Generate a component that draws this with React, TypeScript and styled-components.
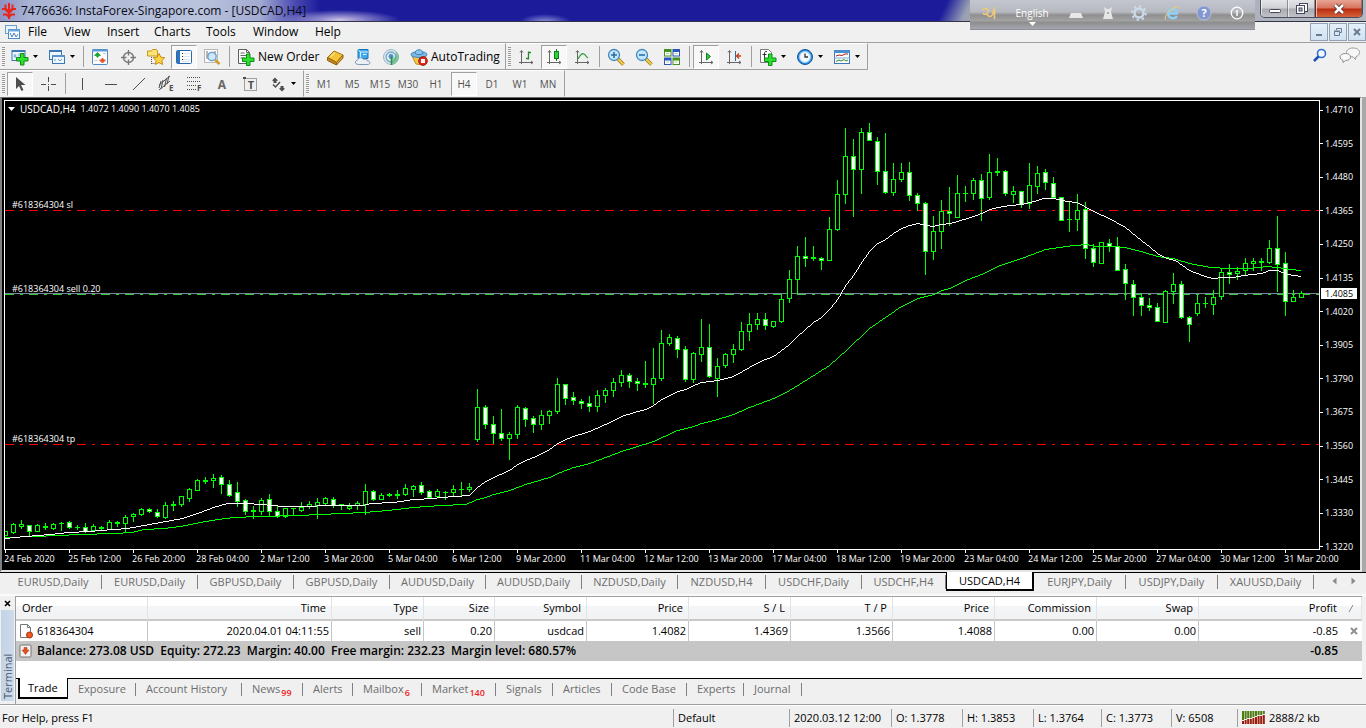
import React from "react";
import styled, { createGlobalStyle } from "styled-components";

const GlobalStyle = createGlobalStyle`
  * { box-sizing: border-box; }
  html, body { margin: 0; padding: 0; }
  body {
    background: #f0f0f0;
    color: #000;
    font: 11px/16px "Open Sans", "Noto Sans", sans-serif;
    overflow: hidden;
  }
  button {
    font: inherit;
    color: inherit;
    margin: 0;
    padding: 0;
    border: 0;
    background: none;
  }
`;

/* ---------- window frame ---------- */

const Window = styled.div`
  min-height: 100vh;
  display: flex;
  flex-direction: column;
  position: relative;
`;

const TitleBar = styled.header`
  height: 22px;
  flex: none;
  display: flex;
  align-items: center;
  gap: 4px;
  padding-left: 1px;
  border-bottom: 1px solid #33334a;
  background:
    radial-gradient(60px 10px at 340px 20px, rgba(215, 205, 235, 0.95), transparent),
    radial-gradient(26px 8px at 545px 22px, rgba(190, 200, 240, 0.7), transparent),
    linear-gradient(90deg, #8d93c4 0, #a9b4d4 30px, #b9c3dc 200px, #a3abd2 260px, rgba(100, 100, 190, 0.6) 296px, transparent 320px),
    linear-gradient(115deg, transparent calc(100% - 388px), #9aa2b4 calc(100% - 366px), #b4b8bf 100%),
    #1c1c9b;
`;

const TitleText = styled.h1`
  margin: 0;
  font-size: 12px;
  line-height: 20px;
  font-weight: 400;
  color: #0a0a14;
  white-space: nowrap;
`;

const LangBar = styled.div`
  position: absolute;
  top: 0;
  right: 111px;
  width: 285px;
  height: 30px;
  display: flex;
  align-items: center;
  justify-content: space-between;
  padding: 0 10px;
  color: #fff;
  border-bottom: 1px solid #8b90a0;
  background: linear-gradient(#c3c6cf 0, #b6b9c0 12px, #8f8f8f 15px, #a3a3a4 21px, #8c8c8c 22px, #a9abb2 30px);
`;

const LangName = styled.button`
  display: flex;
  flex-direction: column;
  align-items: center;
  gap: 2px;
  padding: 2px 3px 0;
  font-size: 10px;
  line-height: 14px;
  color: #fff;
`;

const CaptionButtons = styled.div`
  position: absolute;
  top: 0;
  right: 3px;
  display: flex;
  height: 18px;
  border: 1px solid #4b4d5c;
  border-top: 0;
  border-radius: 0 0 5px 5px;
  overflow: hidden;
`;

const CaptionButton = styled.button<{ $close?: boolean }>`
  width: ${(p) => (p.$close ? 47 : 27)}px;
  display: flex;
  align-items: center;
  justify-content: center;
  border-left: ${(p) => (p.$close ? 1 : 0)}px solid #5a2a24;
  box-shadow: inset 1px 0 0 rgba(255, 255, 255, 0.6), inset -1px 0 0 rgba(90, 90, 100, 0.6);
  background: ${(p) =>
    p.$close
      ? "linear-gradient(#e8a493 0, #d7745f 8px, #bb2b10 9px, #d66a3e 18px)"
      : "linear-gradient(#e4e5e8 0, #cfd0d4 8px, #a9abb1 9px, #c3c5cb 18px)"};
`;

const MenuBar = styled.nav`
  height: 21px;
  flex: none;
  display: flex;
  align-items: center;
  padding-left: 4px;
  border-bottom: 1px solid #a0a0a0;
  background: #f0f0f0;
`;

const MenuItem = styled.button<{ $w: number }>`
  width: ${(p) => p.$w}px;
  font-size: 12px;
  line-height: 18px;
  text-align: left;
  padding-left: 8px;
`;

const DocButtons = styled.div`
  margin-left: auto;
  display: flex;
  gap: 1px;
`;

const DocButton = styled.button`
  width: 18px;
  height: 18px;
  display: flex;
  align-items: center;
  justify-content: center;
  border: 1px solid #93a3b5;
  background: linear-gradient(#e4f0fa, #d0e2f2);
`;

/* ---------- toolbars ---------- */

const ToolRow = styled.div`
  height: 27px;
  flex: none;
  display: flex;
  align-items: stretch;
  background: #f0f0f0;
`;

const ToolGroup = styled.div<{ $line?: boolean }>`
  display: flex;
  align-items: center;
  padding-right: 2px;
  border-top: 1px solid #fff;
  border-right: 1px solid #a0a0a0;
  border-bottom: 1px solid ${(p) => (p.$line ? "#a0a0a0" : "#f0f0f0")};
`;

const Grip = styled.span`
  width: 4px;
  height: 20px;
  margin: 0 0 0 2px;
  background: repeating-linear-gradient(#999 0, #999 1px, #f6f6f6 1px, #f6f6f6 2px);
  border-right: 1px solid #f0f0f0;
`;

const Separator = styled.span`
  width: 1px;
  height: 21px;
  margin: 0 2px 0 3px;
  background: #a0a0a0;
`;

const ToolButton = styled.button<{ $pressed?: boolean; $drop?: boolean }>`
  width: ${(p) => (p.$drop ? 37 : 28)}px;
  height: 24px;
  display: flex;
  align-items: center;
  justify-content: ${(p) => (p.$drop ? "flex-start" : "center")};
  gap: 4px;
  padding-left: ${(p) => (p.$drop ? 5 : 0)}px;
  color: #505050;
  font-size: 10px;
  ${(p) =>
    p.$pressed &&
    `
    width: 26px;
    margin: 0 1px;
    border: 1px solid #a0a0a0;
    border-right-color: #fff;
    border-bottom-color: #fff;
    background: #f8f8f8;
  `}
`;

const LabelButton = styled.button<{ $w: number }>`
  width: ${(p) => p.$w}px;
  height: 24px;
  display: flex;
  align-items: center;
  gap: 3px;
  padding-left: 5px;
  font-size: 12px;
  white-space: nowrap;
`;

const ToolEnd = styled.div`
  margin-left: auto;
  display: flex;
  align-items: center;
  gap: 12px;
  padding-right: 5px;
`;

/* ---------- chart ---------- */

const ChartFrame = styled.main`
  flex: 1 0 auto;
  display: grid;
  grid-template-columns: minmax(0, 1fr) 40px;
  grid-template-rows: 450px 20px;
  padding: 2px 0 0 2px;
  margin-right: 4px;
  background: #000;
  color: #fff;
  font-size: 9px;
  line-height: 12px;
  border-left: 2px solid #808080;
  border-top: 1px solid #6b6b6b;
  border-right: 2px solid #e4e4e4;
  border-bottom: 2px solid #e4e4e4;
  box-shadow: 4px 0 0 #a8a8a8;
`;

const Plot = styled.section`
  position: relative;
  border: 1px solid #fff;
  overflow: hidden;
`;

const PlotSvg = styled.svg`
  display: block;
  width: 100%;
  height: 448px;
`;

const PlotTitle = styled.button`
  position: absolute;
  left: 3px;
  top: 2px;
  display: flex;
  align-items: center;
  gap: 5px;
  color: #fff;
  white-space: nowrap;
`;

const SymbolName = styled.span`
  font-size: 10px;
`;

const LineLabel = styled.span<{ $y: number }>`
  position: absolute;
  left: 7px;
  top: ${(p) => p.$y}px;
`;

const PriceAxis = styled.div`
  position: relative;
  display: flex;
  flex-direction: column;
  justify-content: space-between;
  padding-top: 4px;
  height: 453px;
`;

const PriceTick = styled.span`
  display: flex;
  align-items: center;
  gap: 2px;
  &::before {
    content: "";
    width: 3px;
    height: 1px;
    background: #fff;
  }
`;

const PriceNow = styled.span`
  position: absolute;
  left: 1px;
  top: 188px;
  width: 36px;
  padding-left: 4px;
  line-height: 11px;
  background: #fff;
  color: #000;
`;

const TimeAxis = styled.div`
  grid-column: 1 / 3;
  display: grid;
  grid-template-columns: repeat(21, 64px);
  overflow: hidden;
  white-space: nowrap;
`;

const TimeTick = styled.span`
  position: relative;
  padding-top: 3px;
  &::before {
    content: "";
    position: absolute;
    left: 1px;
    top: 0;
    width: 1px;
    height: 3px;
    background: #fff;
  }
`;

/* ---------- chart tabs ---------- */

const ChartTabs = styled.div`
  height: 24px;
  flex: none;
  display: flex;
  align-items: flex-start;
  padding-left: 5px;
  border-top: 1px solid #000;
  border-bottom: 2px solid #fafafa;
  background: #f0f0f0;
`;

const ChartTab = styled.button<{ $w: number; $active?: boolean }>`
  width: ${(p) => p.$w}px;
  height: 18px;
  color: #6d6d6d;
  white-space: nowrap;
  display: flex;
  align-items: center;
  justify-content: center;
  &::after {
    content: "";
    order: 2;
    width: 1px;
    height: 14px;
    background: #808080;
    margin-left: auto;
  }
  &::before {
    content: "";
    margin-right: auto;
  }
  ${(p) =>
    p.$active &&
    `
    margin-top: -1px;
    height: 19px;
    color: #000;
    background: #fff;
    border: solid #000;
    border-width: 0 2px 2px 1px;
    &::after { display: none; }
    &::before { display: none; }
  `}
`;

const TabArrows = styled.div`
  margin-left: auto;
  display: flex;
  gap: 14px;
  padding: 4px 10px 0 0;
`;

const ArrowButton = styled.button`
  display: flex;
`;

/* ---------- terminal ---------- */

const Terminal = styled.section`
  flex: none;
  display: flex;
  height: 109px;
  border-bottom: 1px solid #a0a0a0;
`;

const TerminalSide = styled.div`
  width: 15px;
  display: flex;
  flex-direction: column;
  padding: 0 1px 3px;
`;

const TerminalClose = styled.button`
  height: 14px;
  display: flex;
  align-items: center;
  justify-content: center;
`;

const TerminalName = styled.span`
  flex: 1;
  writing-mode: vertical-rl;
  transform: rotate(180deg);
  line-height: 13px;
  padding-top: 2px;
  color: #4a5568;
  background: linear-gradient(90deg, #ccdcec, #c3d3e4);
`;

const TerminalBody = styled.div`
  flex: 1;
  min-width: 0;
  display: flex;
  flex-direction: column;
  margin-right: 4px;
  border-top: 1px solid #a0a0a0;
  border-left: 1px solid #a0a0a0;
`;

const TableArea = styled.div`
  flex: 1;
  background: #fff;
  border-bottom: 1px solid #000;
`;

const OrdersTable = styled.table`
  width: 100%;
  table-layout: fixed;
  border-collapse: separate;
  border-spacing: 0;
  white-space: nowrap;
`;

const HeadCell = styled.th<{ $left?: boolean }>`
  height: 24px;
  padding: 0 5px 0 6px;
  font-weight: 400;
  text-align: ${(p) => (p.$left ? "left" : "right")};
  border-right: 1px solid #e2e3e6;
  border-bottom: 2px solid #c8c8c8;
  background: linear-gradient(#fff 40%, #f4f5f7 41%, #f1f2f4);
  &:nth-last-child(2) { border-right: 0; }
`;

const Cell = styled.td<{ $left?: boolean }>`
  height: 20px;
  padding: 0 2px 0 3px;
  text-align: ${(p) => (p.$left ? "left" : "right")};
  border-right: 1px solid #c6c6c6;
  &:nth-last-child(-n + 2) { border-right: 0; padding-right: 4px; }
`;

const TotalCell = styled.td`
  height: 20px;
  padding: 0 4px 0 3px;
  font-size: 12px;
  font-weight: 600;
  background: #c6c6c6;
  text-align: right;
  white-space: pre;
`;

const IconText = styled.span`
  display: flex;
  align-items: center;
  gap: 4px;
`;

const TerminalTabs = styled.div`
  height: 25px;
  flex: none;
  display: flex;
  align-items: flex-start;
  padding-left: 2px;
  background: #f0f0f0;
`;

const TerminalTab = styled.button<{ $w: number; $active?: boolean }>`
  width: ${(p) => p.$w}px;
  height: 20px;
  color: #6d6d6d;
  white-space: nowrap;
  text-align: left;
  padding-left: 10px;
  background: linear-gradient(#808080, #808080) right 4px / 1px 13px no-repeat;
  ${(p) =>
    p.$active &&
    `
    margin-top: -1px;
    height: 21px;
    background: #fff;
    color: #000;
    border: solid #000;
    border-width: 0 1px 2px 2px;
    padding-left: 8px;
  `}
`;

const Badge = styled.sub`
  font-size: 9px;
  line-height: 9px;
  color: #ee1c25;
  vertical-align: -3px;
  margin-left: 1px;
  font-weight: 600;
`;

/* ---------- status bar ---------- */

const StatusBar = styled.footer`
  height: 23px;
  flex: none;
  display: flex;
  align-items: center;
  padding: 1px 0 0 2px;
  border-top: 1px solid #fff;
`;

const StatusHelp = styled.span`
  flex: 1;
`;

const StatusCell = styled.span<{ $w: number }>`
  width: ${(p) => p.$w}px;
  height: 18px;
  line-height: 18px;
  display: flex;
  align-items: center;
  gap: 3px;
  padding-left: 4px;
  white-space: nowrap;
  border-left: 1px solid #a0a0a0;
`;

/* ---------- icons ---------- */

const IconLetter = styled.text`
  font-family: "Open Sans", sans-serif;
  font-weight: 700;
`;

const IconSvg = styled.svg`
  flex: none;
  overflow: visible;
`;

const Icon = ({ children, w = 18, h = 18 }: { children: React.ReactNode; w?: number; h?: number }) => (
  <IconSvg width={w} height={h} viewBox={`0 0 ${w} ${h}`} fill="none" aria-hidden="true">
    {children}
  </IconSvg>
);

const Caret = () => (
  <Icon w={5} h={3}>
    <path d="M0 0h5L2.5 3z" fill="#000" />
  </Icon>
);

const Plus = ({ x, y }: { x: number; y: number }) => (
  <path
    transform={`translate(${x} ${y})`}
    d="M4 0h3.500v4h4v3.500h-4v4h-3.500v-4h-4V4h4z"
    fill="#2ee02e"
    stroke="#0b8a18"
  />
);

const NewChartIcon = () => (
  <Icon>
    <rect x="1" y="2.500" width="13" height="10" fill="#eef6fd" stroke="#3b78b5" />
    <path d="M1 3h13" stroke="#3b78b5" strokeWidth="2" />
    <path d="M4 6v4M2.500 8h3M8 5.500v3" stroke="#6d9cc8" />
    <Plus x={5.5} y={5.5} />
  </Icon>
);

const ProfilesIcon = () => (
  <Icon>
    <rect x="1.500" y="2.500" width="12" height="9" fill="#eef6fd" stroke="#3b78b5" />
    <path d="M1 3h13" stroke="#3b78b5" strokeWidth="2" />
    <rect x="4.500" y="7.500" width="12" height="8" fill="#eef6fd" stroke="#3b78b5" />
    <path d="M4 8h13" stroke="#5a93c9" strokeWidth="2" />
    <path d="M7 11v2M10 11l2 2 2-2" stroke="#6d9cc8" />
  </Icon>
);

const MarketWatchIcon = () => (
  <Icon>
    <rect x="1.500" y="1.500" width="15" height="15" rx="1" fill="#fdfdfd" stroke="#4d8cc8" />
    <path d="M1 2.500h16" stroke="#5b9ad4" strokeWidth="2" />
    <path d="M6.500 4.500l3 3-1.500 0-1.500 2-1.500-2-1.500 0z" fill="#18a32c" stroke="#18a32c" strokeWidth=".8" />
    <path d="M11.500 15l-3-3 1.500 0 1.500-2 1.500 2 1.500 0z" fill="#e2542a" stroke="#e2542a" strokeWidth=".8" />
    <path d="M12 5.500h3M3.500 12.500h3" stroke="#c9c9c9" />
  </Icon>
);

const TargetIcon = () => (
  <Icon>
    <circle cx="9.500" cy="9.500" r="5" stroke="#777" strokeWidth="1.400" />
    <path d="M9.500 2v5.500M9.500 11.500V17M2 9.500h5.500M11.500 9.500H17" stroke="#777" strokeWidth="1.400" />
  </Icon>
);

const NavigatorFolderIcon = () => (
  <Icon>
    <path d="M.5 3h4l1-1.500h4l1 1.500v5H.5z" fill="#fbe57a" stroke="#c79a1e" />
    <path d="M4.500 9v7M4.500 15.500h4" stroke="#555" strokeDasharray="1 1" />
    <path d="M12 5.500l1.800 3.700 4 .5-3 2.800.8 4-3.600-2-3.600 2 .8-4-3-2.800 4-.5z" fill="#fbd63c" stroke="#c98b14" />
  </Icon>
);

const PanelIcon = () => (
  <Icon>
    <rect x="1.500" y="2.500" width="15" height="13" rx="1" fill="#fff" stroke="#2368b0" />
    <rect x="2" y="3" width="3" height="12" fill="#2f74bd" />
    <path d="M7 5.500h8M7 8.500h8M7 11.500h8M7 13.500h8" stroke="#dbe6f2" />
    <path d="M7 5.500h1M7 8.500h1M7 11.500h1" stroke="#333" />
  </Icon>
);

const TesterIcon = () => (
  <Icon>
    <rect x="1.500" y="1.500" width="13" height="13" fill="#fafafa" stroke="#b9b9b9" />
    <path d="M4 3v8M6.500 5v3M12 3v4" stroke="#777" />
    <circle cx="9" cy="8.500" r="4.200" fill="#c6e3f8" fillOpacity=".85" stroke="#6b9dc8" strokeWidth="1.300" />
    <path d="M12.300 12l4.200 4.200" stroke="#d29b22" strokeWidth="2.500" />
  </Icon>
);

const NewOrderIcon = () => (
  <Icon>
    <path d="M1.500 1.500h8l3 3v11h-11z" fill="#fff" stroke="#5d5d5d" />
    <path d="M9.500 1.500v3h3M3.500 5h4M3.500 7.500h6M3.500 10h4" stroke="#666" />
    <Plus x={5.500} y={6} />
  </Icon>
);

const GoldIcon = () => (
  <Icon>
    <path d="M1.500 9.500L8 3l9 4-6.500 7.500z" fill="#f3c33c" stroke="#a87312" />
    <path d="M1.500 9.500l9 5v2.500l-9-4.500z" fill="#c8871a" stroke="#93610e" />
    <path d="M10.500 14.500L17 7v3l-6.500 7z" fill="#e4a82a" stroke="#93610e" />
    <path d="M4.500 9L9 4.800" stroke="#fff2b8" />
  </Icon>
);

const CloudIcon = () => (
  <Icon>
    <path d="M4 1.500h10v9H4z" fill="#3fa9ee" stroke="#1576bd" />
    <path d="M4 1.500L6.500 4v7M6.500 4H14M9 6.500h3.500" stroke="#d9f0ff" />
    <path d="M4.500 16.500c-4 0-4-4-1-4.300.5-3 5-3.200 6-.8 2-1 4 .2 3.800 1.500 3.500 0 3.300 3.600.5 3.600z" fill="#e9eff6" stroke="#7d97b5" />
  </Icon>
);

const SignalIcon = () => (
  <Icon>
    <circle cx="9" cy="9" r="7.500" fill="#dfeaf0" stroke="#9ab8c8" />
    <circle cx="9" cy="9" r="5" stroke="#75a9c4" strokeWidth="1.300" />
    <circle cx="9" cy="8.500" r="2.400" fill="#4f8fcf" />
    <path d="M9.500 16.800c4-.5 6.900-3.400 7.200-7.800-.2-3-1.700-5-3.700-6.200 2 3.500 1.500 6.500-3.500 7.500z" fill="#4fb56b" fillOpacity=".6" />
    <path d="M9.500 9v8" stroke="#2e8c46" strokeWidth="1.500" />
  </Icon>
);

const ExpertIcon = () => (
  <Icon>
    <path d="M2 8l4 8 8 1 2-9z" fill="#f5c94a" stroke="#b9872a" />
    <ellipse cx="9" cy="6.500" rx="8" ry="3" fill="#7dbbe6" stroke="#3d84ba" />
    <path d="M5 5.500c0-5 8-5 8 0-2 1.500-6 1.500-8 0z" fill="#8cc6ee" stroke="#3d84ba" />
    <circle cx="13" cy="13" r="4.300" fill="#e02a1c" stroke="#a81508" />
    <rect x="11" y="11" width="4" height="4" fill="#fff" />
  </Icon>
);

const Axes = () => <path d="M4.500 3v13M2 14.500h14M3 4.500l1.500-2 1.500 2M14 13l2 1.500-2 1.500" stroke="#666" />;

const BarsIcon = () => (
  <Icon>
    <Axes />
    <path d="M11.500 3.500v8M9 10.500h2M12 4.500h2" stroke="#1f8a2c" strokeWidth="1.300" />
  </Icon>
);

const CandlesIcon = () => (
  <Icon>
    <Axes />
    <path d="M11.500 1v12" stroke="#0d7f1e" />
    <rect x="9.500" y="3.500" width="4" height="7" fill="#2fd03f" stroke="#0d7f1e" />
  </Icon>
);

const LineIcon = () => (
  <Icon>
    <Axes />
    <path d="M5 11c2-4 4-6 6-5s2 3 4 4" stroke="#38a046" strokeWidth="1.300" />
  </Icon>
);

const ZoomIcon = ({ plus }: { plus?: boolean }) => (
  <Icon>
    <path d="M11 11l5.500 5.500" stroke="#9c7416" strokeWidth="3.500" />
    <path d="M11 11l5.500 5.500" stroke="#f2cf4e" strokeWidth="2" />
    <circle cx="7" cy="7" r="5.500" fill="#c5e6fb" stroke="#3f87bf" strokeWidth="1.300" />
    <path d={plus ? "M4 7h6M7 4v6" : "M4 7h6"} stroke="#2c6ea6" strokeWidth="1.600" />
  </Icon>
);

const TileIcon = () => (
  <Icon>
    <path d="M1 1h7.500v7.500H1zM9.500 9.500H17V17H9.500z" fill="#43921b" />
    <path d="M9.500 1H17v7.500H9.500zM1 9.500h7.500V17H1z" fill="#2757b8" />
    <path d="M2 4h5.500v3.500H2zM10.500 4H16v3.500h-5.500zM2 12.500h5.500V16H2zM10.500 12.500H16V16h-5.500z" fill="#fff" />
    <path d="M3 5.500h3M11.500 5.500h3M3 14h3M11.500 14h3" stroke="#b9c8a8" />
  </Icon>
);

const AutoScrollIcon = () => (
  <Icon>
    <Axes />
    <path d="M9.500 5v7l4-3.500z" fill="#35c045" stroke="#148524" />
  </Icon>
);

const ShiftIcon = () => (
  <Icon>
    <Axes />
    <path d="M10.500 3v10" stroke="#2b6ca8" />
    <path d="M16 8h-4M14 5.500L11.500 8l2.500 2.500" stroke="#c2401a" strokeWidth="1.300" />
  </Icon>
);

const IndicatorsIcon = () => (
  <Icon>
    <path d="M1.500 1.500h8l3 3v10h-11z" fill="#fff" stroke="#777" />
    <path d="M8 3.500C6 3 5.500 4 5.500 6v5M3.500 6.500h4" stroke="#333" />
    <Plus x={5.500} y={6} />
  </Icon>
);

const ClockIcon = () => (
  <Icon>
    <circle cx="9" cy="9" r="7.500" fill="#2c8ee0" stroke="#13549c" />
    <circle cx="9" cy="9" r="5.500" fill="#f2f8fd" stroke="#9bcbf3" />
    <path d="M9 5.500V9h3" stroke="#333" strokeWidth="1.300" />
  </Icon>
);

const TemplateIcon = () => (
  <Icon>
    <rect x="1.500" y="2.500" width="15" height="13" fill="#fff" stroke="#3b78b5" />
    <path d="M1 3.500h16" stroke="#4a8cd0" strokeWidth="3" />
    <path d="M1 10h16" stroke="#7fa9d0" />
    <path d="M3 8l3-1 3 .5 3-1.500 3 0" stroke="#a32218" />
    <path d="M3 13.500l3-1.500 2 1 3-1.500 2 1.500 2-1" stroke="#2b8a35" />
  </Icon>
);

const CursorIcon = () => (
  <Icon>
    <path d="M5 2v12l3-3 2.500 5 2-1-2.500-5h4.500z" fill="#4d4d4d" />
  </Icon>
);

const CrossIcon = () => (
  <Icon>
    <path d="M9.500 2v5M9.500 11v5M2 9.500h5M12 9.500h5M9 9.500h1" stroke="#4d4d4d" />
  </Icon>
);

const VLineIcon = () => (
  <Icon>
    <path d="M9.500 3v12" stroke="#4d4d4d" />
  </Icon>
);

const HLineIcon = () => (
  <Icon>
    <path d="M4 9.500h12" stroke="#4d4d4d" />
  </Icon>
);

const TrendIcon = () => (
  <Icon>
    <path d="M4 15L16 3" stroke="#4d4d4d" />
  </Icon>
);

const ChannelIcon = () => (
  <Icon>
    <path d="M2 10L13 1M2 15L13 6M4 14l2-9M7.500 12l2-9M10 9l2-8M2 13l2-7" stroke="#4d4d4d" />
    <IconLetter x="12" y="16" fontSize="8" fill="#4d4d4d">E</IconLetter>
  </Icon>
);

const FiboIcon = () => (
  <Icon>
    <path d="M2 2.500h14M2 6.500h14M2 10.500h9M2 14.500h9" stroke="#4d4d4d" strokeDasharray="1 1" />
    <IconLetter x="12" y="16" fontSize="8" fill="#4d4d4d">F</IconLetter>
  </Icon>
);

const LetterA = () => (
  <Icon>
    <IconLetter x="9" y="14" fontSize="12" textAnchor="middle" fill="#666">A</IconLetter>
  </Icon>
);

const TextLabelIcon = () => (
  <Icon>
    <rect x="3.500" y="3.500" width="12" height="12" stroke="#4d4d4d" strokeDasharray="1 1" />
    <IconLetter x="10" y="14" fontSize="11" textAnchor="middle" fill="#4d4d4d">T</IconLetter>
    <path d="M2 2h3v2H2z" fill="#4d4d4d" />
  </Icon>
);

const ArrowsIcon = () => (
  <Icon>
    <path d="M6 2.500l3 3-1.500.5v2h-3V6L3 5.500z" fill="#4d4d4d" />
    <path d="M13 16.500l-3-3 1.500-.5v-2h3v2l1.500.5z" fill="#4d4d4d" />
    <path d="M4 9.500l2.500 2.500 4.500-5" stroke="#4d4d4d" strokeWidth="1.500" />
  </Icon>
);

const LogoIcon = () => (
  <Icon w={16} h={18}>
    <g stroke="#e8251a" strokeWidth="2" fill="none">
      <path d="M8 1v16M4.500 2.500v4L8 10M11.500 2.500v4L8 10M1 7h3l4 4M15 7h-3l-4 4M2 12.500h3.500l2 2M14 12.500h-3.500l-2 2" />
    </g>
  </Icon>
);

const DocIcon = () => (
  <Icon w={16} h={16}>
    <rect x="1.500" y="1.500" width="11" height="8" fill="#eaf3fb" stroke="#6a9fd0" />
    <rect x="4.500" y="5.500" width="11" height="9" fill="#fff" stroke="#4d8ccc" />
    <path d="M4 6.500h12" stroke="#6ca8de" strokeWidth="2" />
    <path d="M6 9l2 4 2-4 2 4 2-3" stroke="#4d7cc0" />
  </Icon>
);

const SearchIcon = () => (
  <Icon w={14} h={14}>
    <circle cx="8.500" cy="5.500" r="4" stroke="#2f6fd6" strokeWidth="1.600" fill="#f4f9ff" />
    <path d="M5.500 8.500L1 13" stroke="#1a4fb5" strokeWidth="2.500" />
  </Icon>
);

const ChatIcon = () => (
  <Icon w={22} h={16}>
    <path d="M14 1c4 0 6.500 1.800 6.500 4.500 0 2-1.500 3.500-3.500 4l-.5 3-2.500-2.700C10 9.800 7.500 8 7.500 5.500S10 1 14 1z" fill="#f7f7f7" stroke="#9b9b9b" />
    <path d="M6.500 6.500c3 0 5 1.400 5 3.500s-2 3.500-5 3.500L4 15.500v-2.200c-1.800-.6-3-1.800-3-3.300 0-2.100 2.500-3.500 5.500-3.500z" fill="#fafafa" stroke="#8d8d8d" />
  </Icon>
);

const OrderIcon = () => (
  <Icon w={14} h={16}>
    <path d="M1.500 1.500h7l3 3v10h-10z" fill="#fff" stroke="#777" />
    <path d="M8.500 1.500v3h3" stroke="#777" />
    <circle cx="10.500" cy="12" r="3" fill="#ee5a24" stroke="#b03008" />
  </Icon>
);

const BalanceIcon = () => (
  <Icon w={14} h={14}>
    <rect x="1" y="1" width="11" height="12" rx="1" fill="#f2f2f2" stroke="#777" />
    <path d="M5 3.500h3V6h2L6.500 10.500 3 6h2z" fill="#e0531e" stroke="#a8330c" strokeWidth=".5" />
  </Icon>
);

const TrafficIcon = () => (
  <Icon w={24} h={14}>
    {Array.from({ length: 9 }, (_, i) => {
      const split = 10 - Math.round(i * 0.75);
      return (
        <g key={i}>
          <rect x={i * 2.6} y="0" width="2" height={split - 1} fill="#4c7d12" />
          <rect x={i * 2.6} y={split} width="2" height={13 - split} fill="#9c1c0c" />
        </g>
      );
    })}
  </Icon>
);

/* ---------- chart data ---------- */

// Each bar: high, body top, body bottom, low, 1 when it closed lower. All in screen rows.
const bars: number[][] = [
  [531, 531, 535, 535, 0], [523, 524, 532, 533, 0], [520, 524, 526, 528, 0], [525, 525, 531, 536, 1],
  [524, 525, 531, 531, 0], [523, 526, 527, 529, 0], [523, 524, 528, 529, 0], [522, 523, 523, 530, 0],
  [521, 522, 527, 528, 1], [525, 527, 527, 529, 0], [523, 527, 531, 532, 1], [524, 526, 530, 530, 0],
  [526, 527, 528, 529, 0], [520, 522, 529, 529, 0], [521, 522, 523, 526, 0], [515, 517, 523, 532, 0],
  [513, 514, 516, 521, 0], [508, 509, 514, 515, 0], [508, 509, 511, 512, 1], [509, 512, 516, 517, 1],
  [502, 505, 517, 518, 0], [501, 504, 505, 510, 0], [496, 496, 504, 506, 0], [488, 489, 498, 501, 0],
  [479, 480, 490, 490, 0], [477, 480, 481, 483, 0], [474, 478, 480, 487, 0], [475, 477, 484, 493, 1],
  [480, 484, 495, 496, 1], [482, 492, 501, 506, 1], [499, 500, 511, 514, 1], [506, 510, 511, 518, 0],
  [498, 500, 511, 514, 0], [494, 499, 511, 515, 1], [506, 511, 516, 517, 1], [508, 508, 516, 517, 0],
  [508, 508, 508, 515, 0], [502, 507, 510, 511, 0], [501, 504, 506, 508, 0], [498, 502, 505, 518, 0],
  [497, 498, 503, 504, 0], [497, 499, 505, 507, 1], [504, 504, 505, 509, 0], [503, 506, 508, 509, 0],
  [501, 503, 505, 509, 0], [484, 491, 504, 514, 0], [490, 491, 499, 500, 1], [493, 495, 499, 499, 0],
  [493, 494, 495, 496, 0], [490, 494, 495, 498, 0], [484, 488, 494, 495, 0], [485, 486, 489, 496, 0],
  [482, 485, 492, 494, 1], [490, 491, 497, 498, 1], [489, 491, 496, 497, 0], [491, 492, 492, 499, 0],
  [485, 489, 492, 495, 0], [482, 489, 489, 495, 0], [483, 487, 489, 491, 0], [389, 407, 439, 441, 0],
  [405, 407, 424, 428, 1], [416, 424, 433, 443, 1], [409, 433, 438, 440, 1], [432, 434, 438, 459, 0],
  [405, 407, 434, 438, 0], [407, 408, 419, 426, 1], [416, 418, 424, 432, 1], [410, 415, 424, 429, 0],
  [410, 411, 415, 423, 0], [378, 384, 411, 413, 0], [384, 384, 398, 404, 1], [392, 397, 400, 404, 1],
  [399, 401, 403, 408, 1], [396, 403, 406, 411, 1], [390, 395, 406, 411, 0], [388, 390, 395, 402, 0],
  [378, 382, 390, 396, 0], [370, 375, 382, 386, 0], [373, 375, 381, 387, 1], [378, 381, 383, 390, 1],
  [361, 383, 384, 387, 0], [348, 378, 384, 403, 0], [330, 343, 378, 380, 0], [334, 337, 343, 345, 0],
  [336, 338, 349, 357, 1], [346, 349, 379, 381, 1], [352, 353, 379, 382, 0], [319, 347, 354, 361, 0],
  [324, 347, 376, 377, 1], [358, 366, 378, 396, 0], [353, 354, 365, 367, 0], [344, 349, 354, 362, 0],
  [322, 331, 349, 350, 0], [313, 324, 331, 340, 0], [313, 319, 324, 329, 0], [313, 319, 325, 329, 1],
  [321, 321, 326, 327, 0], [294, 299, 321, 322, 0], [270, 279, 298, 302, 0], [246, 256, 279, 293, 0],
  [237, 256, 258, 266, 1], [246, 257, 258, 260, 0], [257, 258, 260, 269, 1], [217, 229, 260, 260, 0],
  [180, 194, 229, 230, 0], [128, 156, 194, 203, 0], [139, 156, 169, 216, 1], [128, 132, 169, 193, 0],
  [123, 132, 140, 140, 1], [137, 141, 171, 184, 1], [133, 171, 192, 193, 1], [163, 179, 192, 195, 0],
  [163, 172, 179, 181, 0], [162, 172, 195, 200, 1], [193, 195, 203, 210, 1], [202, 203, 251, 274, 1],
  [216, 231, 251, 259, 0], [200, 211, 231, 248, 0], [187, 211, 213, 225, 1], [175, 193, 217, 217, 0],
  [186, 193, 193, 201, 0], [178, 180, 193, 199, 0], [174, 180, 198, 220, 1], [154, 172, 197, 199, 0],
  [158, 171, 172, 175, 0], [170, 171, 193, 195, 1], [186, 191, 194, 202, 0], [191, 191, 204, 207, 1],
  [163, 185, 203, 208, 0], [166, 173, 186, 193, 0], [169, 172, 182, 189, 1], [177, 183, 197, 197, 1],
  [197, 197, 220, 220, 1], [201, 219, 219, 231, 0], [194, 210, 219, 230, 0], [202, 209, 248, 258, 1],
  [244, 248, 262, 266, 1], [242, 242, 263, 263, 0], [239, 243, 246, 251, 1], [237, 246, 270, 270, 1],
  [264, 269, 283, 299, 1], [280, 284, 297, 315, 1], [293, 297, 305, 315, 1], [298, 305, 307, 310, 1],
  [303, 307, 321, 321, 1], [290, 291, 322, 322, 0], [273, 284, 291, 303, 0], [281, 284, 317, 318, 1],
  [316, 317, 324, 341, 1], [294, 303, 313, 315, 0], [297, 303, 303, 307, 0], [290, 297, 304, 314, 0],
  [269, 272, 296, 299, 0], [264, 272, 274, 283, 1], [267, 271, 273, 279, 0], [258, 263, 270, 274, 0],
  [258, 261, 263, 270, 0], [258, 261, 262, 270, 0], [240, 248, 262, 263, 0], [216, 248, 264, 291, 1],
  [252, 263, 301, 315, 1], [290, 297, 301, 301, 0], [291, 293, 297, 297, 0],
];

const fastAverage =
  "5,538 13,537 25,536 50,534 68,532 88,531 100,530 127,528 138,526 160,522 182,518 200,512 213,507 227,503 247,503 273,505 283,506 310,506 323,505 363,505 370,503 393,502 413,499 433,498 440,497 469,495 477,487 485,481 493,477 509,470 517,464 525,460 533,457 549,449 557,443 565,439 573,436 589,431 605,424 621,416 637,411 645,409 653,405 661,399 677,391 685,389 693,385 701,382 717,380 725,378 733,376 749,367 760,361 773,356 789,344 797,336 813,322 821,317 829,309 837,299 845,285 853,275 861,262 869,251 877,243 885,239 893,233 901,228 909,225 917,223 932,226 941,224 949,223 957,221 973,216 981,213 989,209 997,207 1010,205 1021,204 1029,202 1037,200 1043,198 1053,198 1067,201 1077,202 1093,211 1109,218 1125,227 1141,240 1149,246 1157,253 1167,258 1175,260 1189,270 1205,276 1213,278 1221,277 1233,277 1243,275 1261,273 1269,270 1277,270 1287,274 1301,276";

const slowAverage =
  "5,537 33,536 57,535 80,534 113,533 132,532 143,529 163,528 180,526 200,522 217,519 233,517 257,516 297,515 320,514 363,512 387,510 413,507 440,505 465,504 477,499 485,497 493,494 509,490 525,484 549,477 557,473 573,467 589,463 605,457 621,451 637,446 653,441 677,430 693,426 701,423 717,419 733,414 749,407 773,398 789,390 807,379 821,370 829,365 847,349 869,328 885,317 901,306 917,298 933,294 942,290 949,288 965,280 981,274 997,266 1021,258 1045,249 1052,248 1073,245 1087,244 1095,246 1112,246 1125,247 1141,251 1157,256 1173,258 1189,263 1210,267 1230,268 1247,268 1267,266 1277,267 1290,269 1301,270";

const prices = ["1.4710", "1.4595", "1.4480", "1.4365", "1.4250", "1.4135", "1.4020", "1.3905", "1.3790", "1.3675", "1.3560", "1.3445", "1.3330", "1.3220"];

const times = [
  "24 Feb 2020", "25 Feb 12:00", "26 Feb 20:00", "28 Feb 04:00", "2 Mar 12:00", "3 Mar 20:00", "5 Mar 04:00",
  "6 Mar 12:00", "9 Mar 20:00", "11 Mar 04:00", "12 Mar 12:00", "13 Mar 20:00", "17 Mar 04:00", "18 Mar 12:00",
  "19 Mar 20:00", "23 Mar 04:00", "24 Mar 12:00", "25 Mar 20:00", "27 Mar 04:00", "30 Mar 12:00", "31 Mar 20:00",
];

const Candles = () => (
  <g>
    {bars.map(([high, top, bottom, low, down], i) => {
      const x = 5 + i * 8;
      return (
        <g key={i}>
          <rect x={x} y={high} width="1" height={low - high + 1} fill="#00ff00" />
          <rect x={x - 2} y={top} width="5" height={bottom - top + 1} fill="#00ff00" />
          {bottom - top > 1 && (
            <rect x={x - 1} y={top + 1} width="3" height={bottom - top - 1} fill={down ? "#fff" : "#000"} />
          )}
        </g>
      );
    })}
  </g>
);

// Turns the average's points into a one-pixel staircase, a column at a time.
const staircase = (points: string) => {
  const list = points.split(" ").map((p) => p.split(",").map(Number));
  let d = "";
  let last = list[0][1];
  for (let i = 1; i < list.length; i++) {
    const [x0, y0] = list[i - 1];
    const [x1, y1] = list[i];
    for (let x = x0; x < x1; x++) {
      const y = Math.round(y0 + ((y1 - y0) * (x - x0)) / (x1 - x0));
      const step = y - last;
      const top = step > 1 ? last + 1 : y;
      const height = Math.max(1, Math.abs(step));
      d += `M${x} ${top}h1v${height}h-1z`;
      last = y;
    }
  }
  return d;
};

const DashedLevel = ({ id, y, color }: { id: string; y: number; color: string }) => (
  <>
    <pattern id={id} width="24" height="448" patternUnits="userSpaceOnUse">
      <rect width="9" height="448" fill={color} />
      <rect x="15" width="3" height="448" fill={color} />
    </pattern>
    <rect y={y} width="100%" height="1" fill={`url(#${id})`} />
  </>
);

const Chart = () => (
  <ChartFrame>
    <Plot>
      <PlotSvg shapeRendering="crispEdges" role="img" aria-label="USDCAD H4 candlestick chart">
        <DashedLevel id="stop-loss" y={109} color="#ff0000" />
        <DashedLevel id="take-profit" y={343} color="#ff0000" />
        <rect y="192" width="100%" height="1" fill="#778899" />
        <DashedLevel id="entry" y={193} color="#32cd32" />
        <g transform="translate(-5 -101)">
          <Candles />
          <path d={staircase(slowAverage)} fill="#00ff00" />
          <path d={staircase(fastAverage)} fill="#fff" />
        </g>
      </PlotSvg>
      <PlotTitle>
        <svg width="7" height="4" aria-hidden="true">
          <path d="M0 0h7L3.500 4z" fill="#fff" />
        </svg>
        <SymbolName>USDCAD,H4</SymbolName>
        <span>1.4072 1.4090 1.4070 1.4085</span>
      </PlotTitle>
      <LineLabel $y={98}>#618364304 sl</LineLabel>
      <LineLabel $y={182}>#618364304 sell 0.20</LineLabel>
      <LineLabel $y={332}>#618364304 tp</LineLabel>
    </Plot>
    <PriceAxis>
      {prices.map((p) => (
        <PriceTick key={p}>{p}</PriceTick>
      ))}
      <PriceNow>1.4085</PriceNow>
    </PriceAxis>
    <TimeAxis>
      {times.map((t) => (
        <TimeTick key={t}>{t}</TimeTick>
      ))}
    </TimeAxis>
  </ChartFrame>
);

/* ---------- page data ---------- */

const menus: [string, number][] = [
  ["File", 36], ["View", 43], ["Insert", 47], ["Charts", 52], ["Tools", 47], ["Window", 62], ["Help", 48],
];

const chartTabs: [string, number][] = [
  ["EURUSD,Daily", 97], ["EURUSD,Daily", 96], ["GBPUSD,Daily", 96], ["GBPUSD,Daily", 96], ["AUDUSD,Daily", 96],
  ["AUDUSD,Daily", 96], ["NZDUSD,Daily", 96], ["NZDUSD,H4", 88], ["USDCHF,Daily", 96], ["USDCHF,H4", 84],
  ["USDCAD,H4", 88], ["EURJPY,Daily", 92], ["USDJPY,Daily", 92], ["XAUUSD,Daily", 96],
];

const periods = ["M1", "M5", "M15", "M30", "H1", "H4", "D1", "W1", "MN"];

const terminalTabs: [string, number, string?][] = [
  ["Trade", 50], ["Exposure", 68], ["Account History", 106], ["News", 61, "99"], ["Alerts", 50], ["Mailbox", 69, "6"],
  ["Market", 74, "140"], ["Signals", 57], ["Articles", 59], ["Code Base", 75], ["Experts", 57], ["Journal", 58],
];

const columns = ["Order", "Time", "Type", "Size", "Symbol", "Price", "S / L", "T / P", "Price", "Commission", "Swap", "Profit"];
const columnWidths = [132, 184, 92, 71, 92, 102, 102, 102, 102, 102, 102];
const order = ["618364304", "2020.04.01 04:11:55", "sell", "0.20", "usdcad", "1.4082", "1.4369", "1.3566", "1.4088", "0.00", "0.00", "-0.85"];

const statusCells: [string, number][] = [
  ["Default", 116], ["2020.03.12 12:00", 102], ["O: 1.3778", 71], ["H: 1.3853", 71], ["L: 1.3764", 68],
  ["C: 1.3773", 70], ["V: 6508", 66],
];

export default function App() {
  return (
    <Window>
      <GlobalStyle />
      <TitleBar>
        <LogoIcon />
        <TitleText>7476636: InstaForex-Singapore.com - [USDCAD,H4]</TitleText>
      </TitleBar>

      <MenuBar aria-label="Main menu">
        <DocIcon />
        {menus.map(([name, w]) => (
          <MenuItem key={name} $w={w}>{name}</MenuItem>
        ))}
        <DocButtons>
          <DocButton aria-label="Minimize chart">
            <Icon w={10} h={10}><path d="M2 8h6" stroke="#6b7a8c" strokeWidth="2" /></Icon>
          </DocButton>
          <DocButton aria-label="Restore chart">
            <Icon w={10} h={10}><path d="M3.500 3V1.500h5v4H7M1.500 4.500h5v4h-5zM1 4h6" stroke="#6b7a8c" /></Icon>
          </DocButton>
          <DocButton aria-label="Close chart">
            <Icon w={10} h={10}><path d="M2 2l6 6M8 2L2 8" stroke="#6b7a8c" strokeWidth="2" /></Icon>
          </DocButton>
        </DocButtons>
      </MenuBar>

      <ToolRow>
        <ToolGroup $line>
          <Grip />
          <ToolButton $drop aria-label="New chart"><NewChartIcon /><Caret /></ToolButton>
          <ToolButton $drop aria-label="Profiles"><ProfilesIcon /><Caret /></ToolButton>
          <Separator />
          <ToolButton aria-label="Market watch"><MarketWatchIcon /></ToolButton>
          <ToolButton aria-label="Data window"><TargetIcon /></ToolButton>
          <ToolButton aria-label="Navigator"><NavigatorFolderIcon /></ToolButton>
          <ToolButton $pressed aria-label="Terminal"><PanelIcon /></ToolButton>
          <ToolButton aria-label="Strategy tester"><TesterIcon /></ToolButton>
          <Separator />
          <LabelButton $w={89}><NewOrderIcon />New Order</LabelButton>
          <ToolButton aria-label="MetaEditor"><GoldIcon /></ToolButton>
          <ToolButton aria-label="Virtual hosting"><CloudIcon /></ToolButton>
          <ToolButton aria-label="Signals"><SignalIcon /></ToolButton>
          <LabelButton $w={98}><ExpertIcon />AutoTrading</LabelButton>
        </ToolGroup>
        <ToolGroup $line>
          <Grip />
          <ToolButton aria-label="Bar chart"><BarsIcon /></ToolButton>
          <ToolButton $pressed aria-label="Candlesticks"><CandlesIcon /></ToolButton>
          <ToolButton aria-label="Line chart"><LineIcon /></ToolButton>
          <Separator />
          <ToolButton aria-label="Zoom in"><ZoomIcon plus /></ToolButton>
          <ToolButton aria-label="Zoom out"><ZoomIcon /></ToolButton>
          <ToolButton aria-label="Tile windows"><TileIcon /></ToolButton>
          <Separator />
          <ToolButton $pressed aria-label="Auto scroll"><AutoScrollIcon /></ToolButton>
          <ToolButton aria-label="Chart shift"><ShiftIcon /></ToolButton>
          <Separator />
          <ToolButton $drop aria-label="Indicators"><IndicatorsIcon /><Caret /></ToolButton>
          <ToolButton $drop aria-label="Periods"><ClockIcon /><Caret /></ToolButton>
          <ToolButton $drop aria-label="Templates"><TemplateIcon /><Caret /></ToolButton>
        </ToolGroup>
        <ToolEnd>
          <button aria-label="Search"><SearchIcon /></button>
          <button aria-label="Chat"><ChatIcon /></button>
        </ToolEnd>
      </ToolRow>

      <ToolRow>
        <ToolGroup>
          <Grip />
          <ToolButton $pressed aria-label="Cursor"><CursorIcon /></ToolButton>
          <ToolButton aria-label="Crosshair"><CrossIcon /></ToolButton>
          <Separator />
          <ToolButton aria-label="Vertical line"><VLineIcon /></ToolButton>
          <ToolButton aria-label="Horizontal line"><HLineIcon /></ToolButton>
          <ToolButton aria-label="Trendline"><TrendIcon /></ToolButton>
          <ToolButton aria-label="Equidistant channel"><ChannelIcon /></ToolButton>
          <ToolButton aria-label="Fibonacci retracement"><FiboIcon /></ToolButton>
          <ToolButton aria-label="Text"><LetterA /></ToolButton>
          <ToolButton aria-label="Text label"><TextLabelIcon /></ToolButton>
          <ToolButton $drop aria-label="Arrows"><ArrowsIcon /><Caret /></ToolButton>
        </ToolGroup>
        <ToolGroup>
          <Grip />
          {periods.map((p) => (
            <ToolButton key={p} $pressed={p === "H4"}>{p}</ToolButton>
          ))}
        </ToolGroup>
      </ToolRow>

      <Chart />

      <ChartTabs>
        {chartTabs.map(([name, w], i) => (
          <ChartTab key={i} $w={w} $active={name === "USDCAD,H4"}>{name}</ChartTab>
        ))}
        <TabArrows>
          <ArrowButton aria-label="Scroll left">
            <Icon w={5} h={8}><path d="M4.500 .5v7L.5 4z" fill="#8a8a8a" /></Icon>
          </ArrowButton>
          <ArrowButton aria-label="Scroll right">
            <Icon w={5} h={8}><path d="M.5 .5v7l4-3.500z" fill="#8a8a8a" /></Icon>
          </ArrowButton>
        </TabArrows>
      </ChartTabs>

      <Terminal>
        <TerminalSide>
          <TerminalClose aria-label="Close terminal">
            <Icon w={7} h={7}><path d="M1 1l5 5M6 1L1 6" stroke="#000" strokeWidth="1.600" /></Icon>
          </TerminalClose>
          <TerminalName>Terminal</TerminalName>
        </TerminalSide>
        <TerminalBody>
          <TableArea>
            <OrdersTable>
              <colgroup>
                {columnWidths.map((w, i) => (
                  <col key={i} width={w} />
                ))}
                <col />
                <col width="20" />
              </colgroup>
              <thead>
                <tr>
                  {columns.map((c, i) => (
                    <HeadCell key={i} $left={i === 0}>{c}</HeadCell>
                  ))}
                  <HeadCell aria-label="Close">
                    <Icon w={7} h={8}><path d="M0 8L4 1" stroke="#888" /></Icon>
                  </HeadCell>
                </tr>
              </thead>
              <tbody>
                <tr>
                  {order.map((v, i) => (
                    <Cell key={i} $left={i === 0}>
                      {i === 0 ? <IconText><OrderIcon />{v}</IconText> : v}
                    </Cell>
                  ))}
                  <Cell>
                    <button aria-label="Close order">
                      <Icon w={8} h={8}><path d="M1 1l6 6M7 1L1 7" stroke="#8f8f8f" strokeWidth="2" /></Icon>
                    </button>
                  </Cell>
                </tr>
                <tr>
                  <TotalCell colSpan={11}>
                    <IconText>
                      <BalanceIcon />
                      {"Balance: 273.08 USD  Equity: 272.23  Margin: 40.00  Free margin: 232.23  Margin level: 680.57%"}
                    </IconText>
                  </TotalCell>
                  <TotalCell>-0.85</TotalCell>
                  <TotalCell />
                </tr>
              </tbody>
            </OrdersTable>
          </TableArea>
          <TerminalTabs>
            {terminalTabs.map(([name, w, count]) => (
              <TerminalTab key={name} $w={w} $active={name === "Trade"}>
                {name}
                {count && <Badge>{count}</Badge>}
              </TerminalTab>
            ))}
          </TerminalTabs>
        </TerminalBody>
      </Terminal>

      <StatusBar>
        <StatusHelp>For Help, press F1</StatusHelp>
        {statusCells.map(([text, w]) => (
          <StatusCell key={text} $w={w}>{text}</StatusCell>
        ))}
        <StatusCell $w={129}><TrafficIcon />2888/2 kb</StatusCell>
      </StatusBar>

      <LangBar>
        <button aria-label="Input method">
          <Icon w={16} h={16}>
            <path d="M2 5c3-3 7-1 6 2s-4 3-5 1M7 9c2 5 7 2 6-4M14.500 2v12" stroke="#f0c878" strokeWidth="1.600" />
          </Icon>
        </button>
        <LangName>
          English
          <Icon w={7} h={4}><path d="M0 0h7L3.500 4z" fill="#fff" /></Icon>
        </LangName>
        <button aria-label="Keyboard">
          <Icon w={16} h={16}><path d="M3 8h10l2 5H1z" fill="#e8e8e8" /></Icon>
        </button>
        <button aria-label="Mouse">
          <Icon w={14} h={16}><path d="M3 2l3 2h2l3-2-1 5 2 7H2l2-7z" fill="#e6e6e6" /><circle cx="7" cy="8" r="1" fill="#999" /></Icon>
        </button>
        <button aria-label="Settings">
          <Icon w={16} h={16}>
            <circle cx="8" cy="8" r="4.500" stroke="#cbdbea" strokeWidth="2.500" />
            <circle cx="8" cy="8" r="6.800" stroke="#cbdbea" strokeWidth="2" strokeDasharray="2.500 2.800" />
          </Icon>
        </button>
        <button aria-label="Browser">
          <Icon w={16} h={16}>
            <path d="M4 8.500h9c0-6-8.500-6-8.800 0 0 5.500 7 6 8.500 2.500" stroke="#8fd0f6" strokeWidth="2.400" />
            <path d="M1.500 14.500C-1 11 9 1 15 2" stroke="#f0cf6c" />
          </Icon>
        </button>
        <button aria-label="Help">
          <Icon w={16} h={16}>
            <circle cx="8" cy="8" r="7" fill="#8296cf" stroke="#b5c0e0" />
            <IconLetter x="8" y="12" fontSize="11" textAnchor="middle" fill="#fff">?</IconLetter>
          </Icon>
        </button>
        <button aria-label="About">
          <Icon w={16} h={16}>
            <circle cx="8" cy="8" r="5.800" stroke="#fff" strokeWidth="1.300" />
            <path d="M8 5v6" stroke="#fff" strokeWidth="1.500" />
          </Icon>
        </button>
      </LangBar>

      <CaptionButtons>
        <CaptionButton aria-label="Minimize">
          <Icon w={14} h={12}><rect x="1.500" y="6.500" width="11" height="3" rx="1" fill="#fff" stroke="#44485c" /></Icon>
        </CaptionButton>
        <CaptionButton aria-label="Restore">
          <Icon w={14} h={12}>
            <rect x="4.500" y=".5" width="8" height="8" fill="#fff" stroke="#44485c" />
            <rect x="1.500" y="2.500" width="8" height="8" fill="#fff" stroke="#44485c" />
            <rect x="4" y="5" width="3" height="3" fill="#b5b7bf" stroke="#44485c" />
          </Icon>
        </CaptionButton>
        <CaptionButton $close aria-label="Close">
          <Icon w={14} h={12}>
            <path d="M3 2l8 8M11 2l-8 8" stroke="#5b2a2a" strokeWidth="4.200" />
            <path d="M3 2l8 8M11 2l-8 8" stroke="#fff" strokeWidth="2.500" />
          </Icon>
        </CaptionButton>
      </CaptionButtons>
    </Window>
  );
}
